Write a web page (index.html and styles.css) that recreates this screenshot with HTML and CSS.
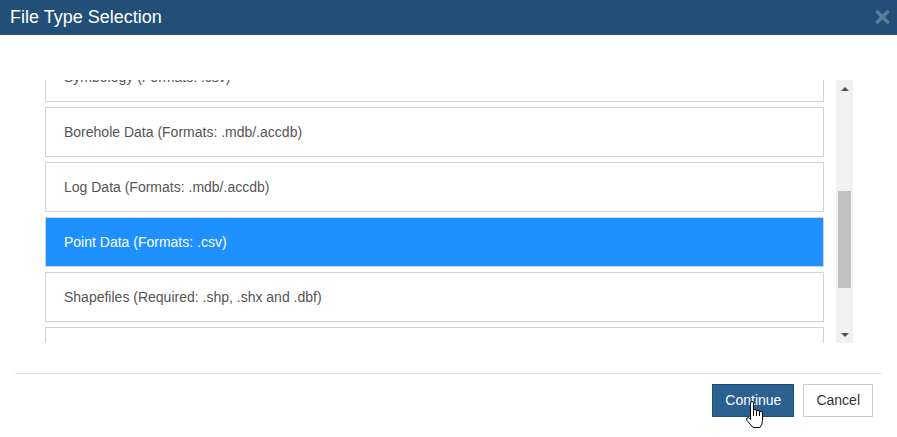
FILE: index.html
```html
<!DOCTYPE html>
<html lang="en">
<head>
<meta charset="utf-8">
<title>File Type Selection</title>
<link rel="stylesheet" href="styles.css">
</head>
<body>
<div class="modal">
  <div class="modal-header">
    <h4 class="modal-title">File Type Selection</h4>
    <svg class="close" width="15" height="14" viewBox="0 0 15 14" aria-label="Close">
      <path d="M2.5,2 L12.5,12 M12.5,2 L2.5,12" stroke="#5b7d9c" stroke-width="3.6" stroke-linecap="round"/>
    </svg>
  </div>
  <div class="modal-body">
    <div class="list-frame">
      <div class="list-viewport">
        <div class="list-inner">
          <div class="item">Symbology (Formats: .csv)</div>
          <div class="item">Borehole Data (Formats: .mdb/.accdb)</div>
          <div class="item">Log Data (Formats: .mdb/.accdb)</div>
          <div class="item selected">Point Data (Formats: .csv)</div>
          <div class="item">Shapefiles (Required: .shp, .shx and .dbf)</div>
          <div class="item empty"></div>
        </div>
      </div>
      <div class="scrollbar">
        <div class="sb-btn"><span class="arrow up"></span></div>
        <div class="sb-track"><div class="sb-thumb"></div></div>
        <div class="sb-btn"><span class="arrow down"></span></div>
      </div>
    </div>
  </div>
  <div class="modal-footer">
    <button class="btn btn-primary">Continue</button>
    <button class="btn btn-default">Cancel</button>
  </div>
  <svg class="cursor" width="19" height="28" viewBox="0 0 19 28">
    <path d="M5.5,12.5 V2 Q5.5,0.5 7,0.5 Q8.5,0.5 8.5,2 V9.5 Q8.5,8.5 10,8.5 Q11.5,8.5 11.5,10 V10.5 Q11.5,9.5 13,9.5 Q14.5,9.5 14.5,11 V11.5 Q14.5,10.5 16,10.5 Q17.5,10.5 17.5,12 V19.5 Q17.5,23.5 15,26.5 H8 Q5.5,23.5 2,19.5 Q1,18 2,17 Q3.3,16 4.5,17.5 L5.5,18.5 Z" fill="#fff" stroke="#000" stroke-width="1" stroke-linejoin="round"/>
    <path d="M8.5,10 V15 M11.5,10.5 V15 M14.5,11.5 V15" stroke="#000" stroke-width="1" fill="none"/>
  </svg>
</div>
</body>
</html>
```

FILE: styles.css
```css
html, body {
  margin: 0;
  padding: 0;
  background: #fff;
}

body {
  font-family: "Liberation Sans", Arial, sans-serif;
  width: 897px;
  height: 437px;
  overflow: hidden;
}

.modal {
  position: relative;
  height: 437px;
}

.modal-header {
  height: 35px;
  box-sizing: border-box;
  background: #224f77;
  border-bottom: 1px solid #2f5b82;
  padding: 0 7px 0 10px;
  display: flex;
  align-items: center;
  justify-content: space-between;
}

.modal-title {
  margin: 0;
  color: #fff;
  font-size: 18px;
  font-weight: normal;
  line-height: 20px;
}

.close {
  display: block;
  margin-top: 0;
}

.modal-body {
  padding: 45px 44px 30px 45px;
}

.list-frame {
  display: flex;
  gap: 12px;
  height: 263px;
}

.list-viewport {
  flex: 1;
  overflow: hidden;
}

.list-inner {
  margin-top: -28px;
  display: flex;
  flex-direction: column;
  gap: 5px;
}

.item {
  border: 1px solid #d3d3d3;
  padding: 14px 18px;
  line-height: 20px;
  font-size: 14px;
  color: #555;
  height: 20px;
}

.item.selected {
  background: #1e90ff;
  color: #fff;
}

.scrollbar {
  width: 17px;
  background: #f1f1f1;
  display: flex;
  flex-direction: column;
}

.sb-btn {
  height: 17px;
  display: flex;
  align-items: center;
  justify-content: center;
}

.arrow {
  width: 0;
  height: 0;
  border-left: 4px solid transparent;
  border-right: 4px solid transparent;
}

.arrow.up {
  border-bottom: 4px solid #505050;
}

.arrow.down {
  border-top: 4px solid #505050;
}

.sb-track {
  flex: 1;
  padding-top: 94px;
}

.sb-thumb {
  margin: 0 2px;
  height: 97px;
  background: #c1c1c1;
}

.modal-footer {
  margin: 0 15px;
  border-top: 1px solid #e5e5e5;
  padding: 10px 9px 0 0;
  display: flex;
  justify-content: flex-end;
  gap: 9px;
}

.btn {
  height: 33px;
  box-sizing: border-box;
  padding: 6px 12px;
  font-family: "Liberation Sans", Arial, sans-serif;
  font-size: 14px;
  line-height: 19px;
  border: 1px solid;
  border-radius: 0;
  cursor: pointer;
}

.btn-primary {
  background: #2b6191;
  border-color: #204d74;
  color: #fff;
}

.btn-default {
  background: #fff;
  border-color: #ccc;
  color: #333;
}

.cursor {
  position: absolute;
  left: 745px;
  top: 401px;
}
```
